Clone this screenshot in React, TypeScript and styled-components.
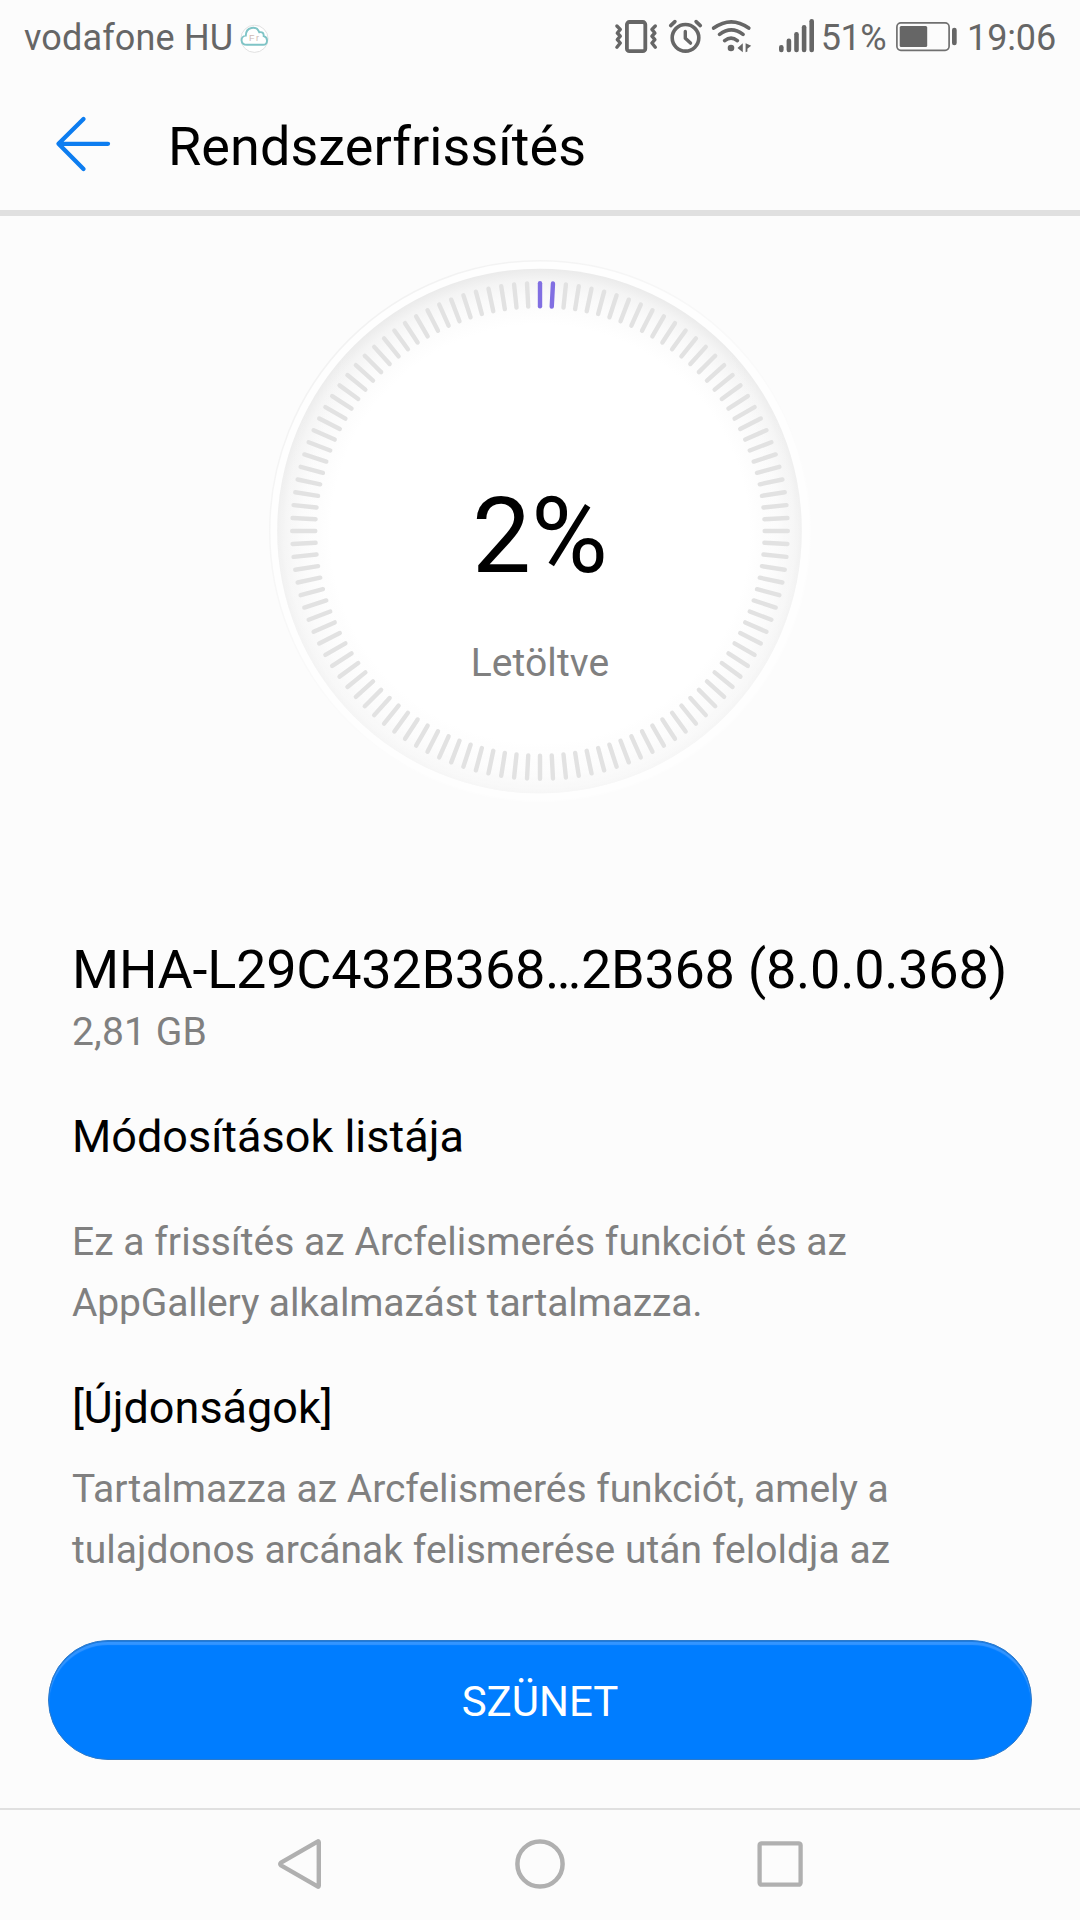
import React from 'react';
import styled, { createGlobalStyle } from 'styled-components';

const GlobalStyle = createGlobalStyle`
  * { box-sizing: border-box; }
  body {
    margin: 0;
    background: #fcfcfc;
    font-family: Roboto, "Noto Sans", sans-serif;
  }
  h1, h2, h3, p { margin: 0; font-weight: 400; }
  svg { display: block; flex: none; }
`;

const Screen = styled.div`
  width: 1080px;
  height: 1920px;
  display: flex;
  flex-direction: column;
  background: #fcfcfc;
  overflow: hidden;
`;

const StatusBar = styled.div`
  height: 74px;
  flex: none;
  display: flex;
  align-items: center;
  justify-content: space-between;
  padding: 0 24px;
  color: #666;
`;

const StatusGroup = styled.div`
  display: flex;
  align-items: center;
  white-space: nowrap;
`;

const StatusIcon = styled.span<{ $before?: number; $drop?: number }>`
  margin-left: ${({ $before = 0 }) => $before}px;
  margin-top: ${({ $drop = 0 }) => $drop}px;
`;

const StatusText = styled.span<{ $before?: number; $tracking?: number }>`
  margin-left: ${({ $before = 0 }) => $before}px;
  padding-top: 2px;
  font-size: 36px;
  line-height: 74px;
  letter-spacing: ${({ $tracking = 0 }) => $tracking}px;
`;

const Header = styled.header`
  height: 142px;
  flex: none;
  display: flex;
  align-items: flex-start;
  border-bottom: 6px solid #e0e0e0;
  padding: 40px 0 0 53px;
`;

const BackButton = styled.button`
  width: 60px;
  height: 60px;
  padding: 0;
  border: 0;
  background: none;
`;

const Title = styled.h1`
  margin: 1px 0 0 55px;
  font-size: 54px;
  line-height: 64px;
  letter-spacing: 0.05px;
  color: #000;
`;

const Gauge = styled.section`
  position: relative;
  width: 560px;
  height: 560px;
  flex: none;
  align-self: center;
  margin-top: 35px;
  padding-top: 226px;
  display: flex;
  flex-direction: column;
  align-items: center;
  gap: 43px;
`;

const Dial = styled.svg`
  position: absolute;
  inset: 0;
`;

const Percent = styled.div`
  position: relative;
  font-size: 105px;
  line-height: 120px;
  color: #000;
`;

const GaugeLabel = styled.div`
  position: relative;
  font-size: 39px;
  line-height: 46px;
  letter-spacing: 0.1px;
  color: #808080;
`;

const Details = styled.main`
  flex: 1;
  min-height: 0;
  overflow: hidden;
  padding: 127px 40px 0 72px;
`;

const Version = styled.h2`
  font-size: 54px;
  line-height: 64px;
  letter-spacing: -0.26px;
  white-space: nowrap;
  color: #000;
`;

const Size = styled.p`
  margin-top: 7px;
  font-size: 39px;
  line-height: 46px;
  letter-spacing: 0.15px;
  color: #808080;
`;

const Heading = styled.h3<{ $before: number }>`
  margin-top: ${({ $before }) => $before}px;
  font-size: 45px;
  line-height: 54px;
  color: #000;
`;

const Paragraph = styled.p<{ $before: number }>`
  margin-top: ${({ $before }) => $before}px;
  font-size: 39px;
  line-height: 61px;
  color: #808080;
`;

const Line = styled.span<{ $tracking: number }>`
  display: block;
  letter-spacing: ${({ $tracking }) => $tracking}px;
`;

const Actions = styled.div`
  flex: none;
  padding: 0 48px 48px;
`;

const PauseButton = styled.button`
  display: block;
  width: 100%;
  height: 120px;
  padding: 2px 0 0;
  border: 1px solid #2c7acb;
  border-radius: 60px;
  background: #007dff;
  box-shadow: inset 0 1px 0 #1c7be0, inset 0 4px 1px #3395ff;
  font-family: inherit;
  font-size: 42px;
  color: #fff;
`;

const NavBar = styled.nav`
  height: 112px;
  flex: none;
  display: flex;
  align-items: center;
  justify-content: center;
  gap: 180px;
  padding-bottom: 2px;
  border-top: 2px solid #e0e0e0;
`;

const NavButton = styled.button`
  width: 60px;
  height: 60px;
  padding: 0;
  border: 0;
  background: none;
`;

const CloudIcon = () => (
  <svg width="30" height="30" viewBox="241 24 30 30">
    <circle cx="255.5" cy="38.8" r="13.6" fill="#fff" stroke="#dedede" strokeWidth="0.9" />
    <path
      d="M248 44.8c-7 0-7-8.500-1.200-9.200 0-8.400 10.600-10.600 13.400-3.400 3.800-.6 4.600 1.400 4.500 4 4.800 1.200 4.200 8.600-.6 8.600z"
      fill="#fff"
      stroke="#7fc4c6"
      strokeWidth="1.9"
    />
    <text x="250" y="41.400" fontSize="9" fontFamily="Liberation Sans, sans-serif" letterSpacing="1.4" fill="#cdb9b4">
      Fr
    </text>
  </svg>
);

const VibrateIcon = () => (
  <svg width="44" height="40" viewBox="614 17 44 40" fill="none" stroke="#666" strokeLinecap="round" strokeLinejoin="round">
    <rect x="626.900" y="22" width="18.400" height="29.200" rx="2.500" strokeWidth="3.800" />
    <path d="M616.900 26l3.400 3.400-3 3.600 3 3.200-3 3.400 3 3.400-3.400 4.200" strokeWidth="3.400" />
    <path d="M655.300 26l-3.400 3.400 3 3.600-3 3.200 3 3.400-3 3.400 3.400 4.200" strokeWidth="3.400" />
  </svg>
);

const AlarmIcon = () => (
  <svg width="35" height="40" viewBox="668 17 35 40" fill="none" stroke="#666" strokeLinecap="round" strokeLinejoin="round">
    <circle cx="685.500" cy="37.800" r="13.300" strokeWidth="3.600" />
    <path d="M685.300 31.500v6.800l5.200 4.800" strokeWidth="3.400" />
    <path d="M670.700 25.600l4.200-4M700.300 25.600l-4.200-4" strokeWidth="3.600" />
  </svg>
);

const WifiIcon = () => (
  <svg width="41" height="40" viewBox="711 17 41 40" fill="none" stroke="#666" strokeLinecap="round">
    <path d="M713.700 28.100q17.500-12.600 35 0M719.600 34.400q11.700-9 23.400 0M724.700 40.600q6.400-5 12.600 0" strokeWidth="3.700" />
    <circle cx="731" cy="48" r="3.300" fill="#666" stroke="none" />
    <path d="M737.500 48l5.300-4.800v9zM745.600 43.200v9l1.800-.6v-2.800l3.800-3z" fill="#666" stroke="none" />
  </svg>
);

const SIGNAL_BARS = [45, 38.5, 32, 25, 19];

const SignalIcon = () => (
  <svg width="37" height="40" viewBox="778 17 37 40" fill="#666">
    {SIGNAL_BARS.map((top, i) => (
      <rect key={top} x={779 + i * 7.6} y={top} width="4.6" height={52.3 - top} rx="2.2" />
    ))}
  </svg>
);

const BatteryIcon = () => (
  <svg width="61" height="40" viewBox="896 17 61 40">
    <rect x="896.900" y="22.900" width="52.200" height="27.400" rx="4" fill="none" stroke="#707070" strokeWidth="1.700" />
    <rect x="899.700" y="26" width="27.500" height="21" rx="1.500" fill="#666" />
    <rect x="952" y="27.700" width="4.700" height="17.500" rx="2.300" fill="#666" />
  </svg>
);

const TICK_COUNT = 120;
const PROGRESS = 2;

const ProgressDial = () => (
  <Dial width="560" height="560" viewBox="-280 -280 560 560">
    <defs>
      <linearGradient id="ring" x1="0.2" y1="0.1" x2="0.8" y2="0.9">
        <stop offset="0" stopColor="#f2f2f2" />
        <stop offset="0.5" stopColor="#fafafa" />
        <stop offset="0.75" stopColor="#fdfdfd" />
      </linearGradient>
      <radialGradient id="disc" gradientUnits="userSpaceOnUse" cx="0" cy="3" r="265">
        <stop offset="0.79" stopColor="#fff" />
        <stop offset="0.9" stopColor="#fafafa" />
        <stop offset="0.96" stopColor="#f4f4f4" />
        <stop offset="1" stopColor="#ebebeb" />
      </radialGradient>
      <linearGradient id="fade" x1="0" y1="0" x2="0" y2="1">
        <stop offset="0.1" stopColor="#fff" stopOpacity="0" />
        <stop offset="1" stopColor="#fff" stopOpacity="0.45" />
      </linearGradient>
    </defs>
    <circle r="270.300" fill="#fefefe" stroke="url(#ring)" strokeWidth="1.500" />
    <circle cx="-0.500" r="262.300" fill="url(#disc)" />
    <circle cx="-0.500" r="262.300" fill="url(#fade)" />
    {Array.from({ length: TICK_COUNT }, (_, i) => (
      <line
        key={i}
        y1="-247.800"
        y2="-224.700"
        transform={`rotate(${(i * 360) / TICK_COUNT})`}
        stroke={i < PROGRESS ? '#816fe2' : '#e2e2e2'}
        strokeWidth="4.400"
        strokeLinecap="round"
      />
    ))}
  </Dial>
);

export default function App() {
  return (
    <Screen>
      <GlobalStyle />
      <StatusBar>
        <StatusGroup>
          <StatusText $tracking={0.15}>vodafone HU</StatusText>
          <StatusIcon $before={7} $drop={4}><CloudIcon /></StatusIcon>
        </StatusGroup>
        <StatusGroup>
          <StatusIcon><VibrateIcon /></StatusIcon>
          <StatusIcon $before={10}><AlarmIcon /></StatusIcon>
          <StatusIcon $before={8}><WifiIcon /></StatusIcon>
          <StatusIcon $before={26}><SignalIcon /></StatusIcon>
          <StatusText $before={6} $tracking={-0.5}>51%</StatusText>
          <StatusIcon $before={10}><BatteryIcon /></StatusIcon>
          <StatusText $before={10} $tracking={-0.15}>19:06</StatusText>
        </StatusGroup>
      </StatusBar>
      <Header>
        <BackButton aria-label="Vissza">
          <svg width="60" height="60" viewBox="53 114 60 60" fill="none" stroke="#0d7df0" strokeWidth="4.300" strokeLinecap="round" strokeLinejoin="round">
            <path d="M83.500 119L58.500 143.800l25 25.200M58.500 143.800h49.500" />
          </svg>
        </BackButton>
        <Title>Rendszerfrissítés</Title>
      </Header>
      <Gauge>
        <ProgressDial />
        <Percent>{PROGRESS}%</Percent>
        <GaugeLabel>Letöltve</GaugeLabel>
      </Gauge>
      <Details>
        <Version>MHA-L29C432B368…2B368 (8.0.0.368)</Version>
        <Size>2,81 GB</Size>
        <Heading $before={55}>Módosítások listája</Heading>
        <Paragraph $before={48}>
          <Line $tracking={0.04}>Ez a frissítés az Arcfelismerés funkciót és az</Line>
          <Line $tracking={-0.14}>AppGallery alkalmazást tartalmazza.</Line>
        </Paragraph>
        <Heading $before={47}>[Újdonságok]</Heading>
        <Paragraph $before={24}>
          <Line $tracking={-0.03}>Tartalmazza az Arcfelismerés funkciót, amely a</Line>
          <Line $tracking={0.04}>tulajdonos arcának felismerése után feloldja az</Line>
        </Paragraph>
      </Details>
      <Actions>
        <PauseButton>SZÜNET</PauseButton>
      </Actions>
      <NavBar>
        <NavButton aria-label="Vissza">
          <svg width="60" height="60" viewBox="270 1834 60 60" fill="none" stroke="#b0b0b0" strokeWidth="4.400" strokeLinejoin="round">
            <path d="M317.500 1841.600q1.300-.8 1.300 .8v43.200q0 1.600-1.300 .8l-36.500-21q-1.600-1.400 0-2.800z" />
          </svg>
        </NavButton>
        <NavButton aria-label="Kezdőlap">
          <svg width="60" height="60" viewBox="510 1834 60 60" fill="none" stroke="#b0b0b0" strokeWidth="4.500">
            <circle cx="540" cy="1864" r="22.600" />
          </svg>
        </NavButton>
        <NavButton aria-label="Legutóbbi">
          <svg width="60" height="60" viewBox="750 1834 60 60" fill="none" stroke="#b0b0b0" strokeWidth="4.300">
            <rect x="759.600" y="1843.300" width="41" height="41.400" rx="2" />
          </svg>
        </NavButton>
      </NavBar>
    </Screen>
  );
}
